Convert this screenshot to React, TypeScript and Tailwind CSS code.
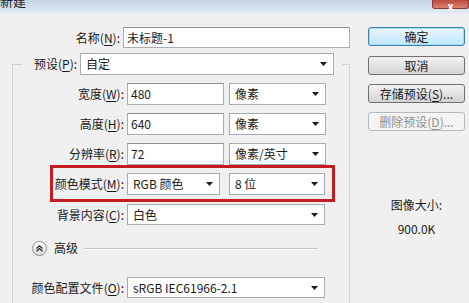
import React from 'react';

const font = "font-['Noto_Sans_CJK_SC','Liberation_Sans',sans-serif]";

// label with mnemonic key underlined, e.g. 名称(N):
const Label = ({ text, k }: { text: string; k: string }) => (
  <span className="whitespace-nowrap">
    {text}(<span className="underline underline-offset-2">{k}</span>):
  </span>
);

const Arrow = () => (
  <svg width="7" height="4" viewBox="0 0 7 4" className="shrink-0">
    <path d="M0 0h7L3.5 4z" fill="#1a1a1a" />
  </svg>
);

const Select = ({ value, w }: { value: string; w: string }) => (
  <div
    className={`${w} h-full flex items-center justify-between bg-white border border-[#a7abb0] pl-[5px] pr-[6px]`}
  >
    <span className="whitespace-nowrap">{value}</span>
    <Arrow />
  </div>
);

const Input = ({ value, w }: { value: string; w: string }) => (
  <div className={`${w} h-full flex items-center bg-white border border-[#abadb3] border-t-[#8e9195] pl-[3px]`}>
    <span className="whitespace-nowrap">{value}</span>
  </div>
);

type Row = { label: string; k: string; value: string; unit: string; top: string };

const sizeRows: Row[] = [
  { label: '宽度', k: 'W', value: '480', unit: '像素', top: 'mt-[8px]' },
  { label: '高度', k: 'H', value: '640', unit: '像素', top: 'mt-[8px]' },
  { label: '分辨率', k: 'R', value: '72', unit: '像素/英寸', top: 'mt-[8px]' },
];

const Button = ({ children, variant }: { children: React.ReactNode; variant?: 'default' | 'disabled' }) => {
  const look =
    variant === 'default'
      ? 'border-[#3c7fb1] shadow-[inset_0_0_0_1px_#a8dcf3] from-[#eaf6fd] to-[#bee6fd] text-[#1a1a1a]'
      : variant === 'disabled'
      ? 'border-[#b5b9bc] from-[#f4f4f4] to-[#f4f4f4] text-[#8f8f8f]'
      : 'border-[#707070] from-[#f2f2f2] to-[#d4d4d4] text-[#1a1a1a]';
  return (
    <div
      className={`w-[97px] h-[19px] flex items-center justify-center rounded-[3px] border bg-linear-to-b ${look}`}
    >
      {children}
    </div>
  );
};

export default function App() {
  return (
    <div className={`w-[469px] h-[303px] overflow-hidden bg-[#f0f0f0] flex flex-col text-[12px] leading-none text-[#1a1a1a] ${font}`}>
      {/* title bar, mostly cropped off */}
      <div className="h-[14px] shrink-0 flex items-start justify-between bg-linear-to-b from-[#c3d4e6] to-[#e4ecf4]">
        <span className="text-[13px] -mt-[6px] text-[#222]">新建</span>
        <div className="w-[37px] h-[9px] flex items-end justify-center rounded-b-[3px] bg-linear-to-b from-[#b94a3e] to-[#d8806f] border border-t-0 border-[#8d3a31]">
          <span className="text-white text-[11px] font-bold -mb-[4px]">x</span>
        </div>
      </div>

      <div className="flex flex-1">
        {/* left column */}
        <div className="w-[350px] shrink-0 flex flex-col">
          <div className="mt-[13px] h-[21px] flex items-center">
            <div className="w-[124px] text-right">
              <Label text="名称" k="N" />
            </div>
            <div className="ml-[3px] h-full">
              <Input value="未标题-1" w="w-[227px]" />
            </div>
          </div>

          <fieldset className="mt-[5px] ml-[12px] w-[338px] h-[300px] border border-[#cfd3d6]">
            <legend className="ml-[9px] pl-[12px] pr-[8px]">
              <div className="h-[22px] flex items-center">
                <Label text="预设" k="P" />
                <div className="ml-[3px] h-full">
                  <Select value="自定" w="w-[254px]" />
                </div>
              </div>
            </legend>

            {sizeRows.map((r) => (
              <div key={r.k} className={`${r.top} h-[22px] flex items-center`}>
                <div className="w-[111px] text-right">
                  <Label text={r.label} k={r.k} />
                </div>
                <div className="ml-[3px] h-full">
                  <Input value={r.value} w="w-[97px]" />
                </div>
                <div className="ml-[5px] h-full">
                  <Select value={r.unit} w="w-[97px]" />
                </div>
              </div>
            ))}

            {/* highlighted colour mode row */}
            <div className="ml-[37px] w-[285px] border-[3px] border-[#c51c22] pt-[5px] pb-[4px] pr-[7px]">
              <div className="h-[22px] flex items-center">
                <div className="w-[71px] text-right">
                  <Label text="颜色模式" k="M" />
                </div>
                <div className="ml-[3px] h-full">
                  <Select value="RGB 颜色" w="w-[93px]" />
                </div>
                <div className="ml-[9px] h-full">
                  <Select value="8 位" w="w-[96px]" />
                </div>
              </div>
            </div>

            <div className="mt-[2px] h-[21px] flex items-center">
              <div className="w-[111px] text-right">
                <Label text="背景内容" k="C" />
              </div>
              <div className="ml-[3px] h-full">
                <Select value="白色" w="w-[198px]" />
              </div>
            </div>

            {/* advanced */}
            <div className="mt-[16px] h-[14px] flex items-center">
              <div className="ml-[19px] w-[15px] h-[15px] rounded-full border border-[#8f8f8f] bg-linear-to-b from-white to-[#d9d9d9] flex items-center justify-center">
                <svg width="7" height="7" viewBox="0 0 7 7">
                  <path d="M0.5 3.5L3.5 0.8L6.5 3.5M0.5 6.3L3.5 3.6L6.5 6.3" fill="none" stroke="#222" strokeWidth="1.2" />
                </svg>
              </div>
              <span className="ml-[7px]">高级</span>
              <div className="ml-[6px] w-[234px] border-t border-[#c4c4c4] shadow-[0_1px_0_#fff]" />
            </div>

            <div className="mt-[22px] h-[21px] flex items-center">
              <div className="w-[111px] text-right">
                <Label text="颜色配置文件" k="O" />
              </div>
              <div className="ml-[3px] h-full">
                <Select value="sRGB IEC61966-2.1" w="w-[198px]" />
              </div>
            </div>
          </fieldset>
        </div>

        {/* right column */}
        <div className="ml-[18px] w-[97px] flex flex-col items-center">
          <div className="mt-[13px]">
            <Button variant="default">确定</Button>
          </div>
          <div className="mt-[10px]">
            <Button>取消</Button>
          </div>
          <div className="mt-[9px]">
            <Button>
              存储预设(<span className="underline underline-offset-2">S</span>)...
            </Button>
          </div>
          <div className="mt-[9px]">
            <Button variant="disabled">
              删除预设(<span className="underline underline-offset-2">D</span>)...
            </Button>
          </div>
          <span className="mt-[68px] text-[#222]">图像大小:</span>
          <span className="mt-[12px] text-[#222]">900.0K</span>
        </div>
      </div>
    </div>
  );
}
